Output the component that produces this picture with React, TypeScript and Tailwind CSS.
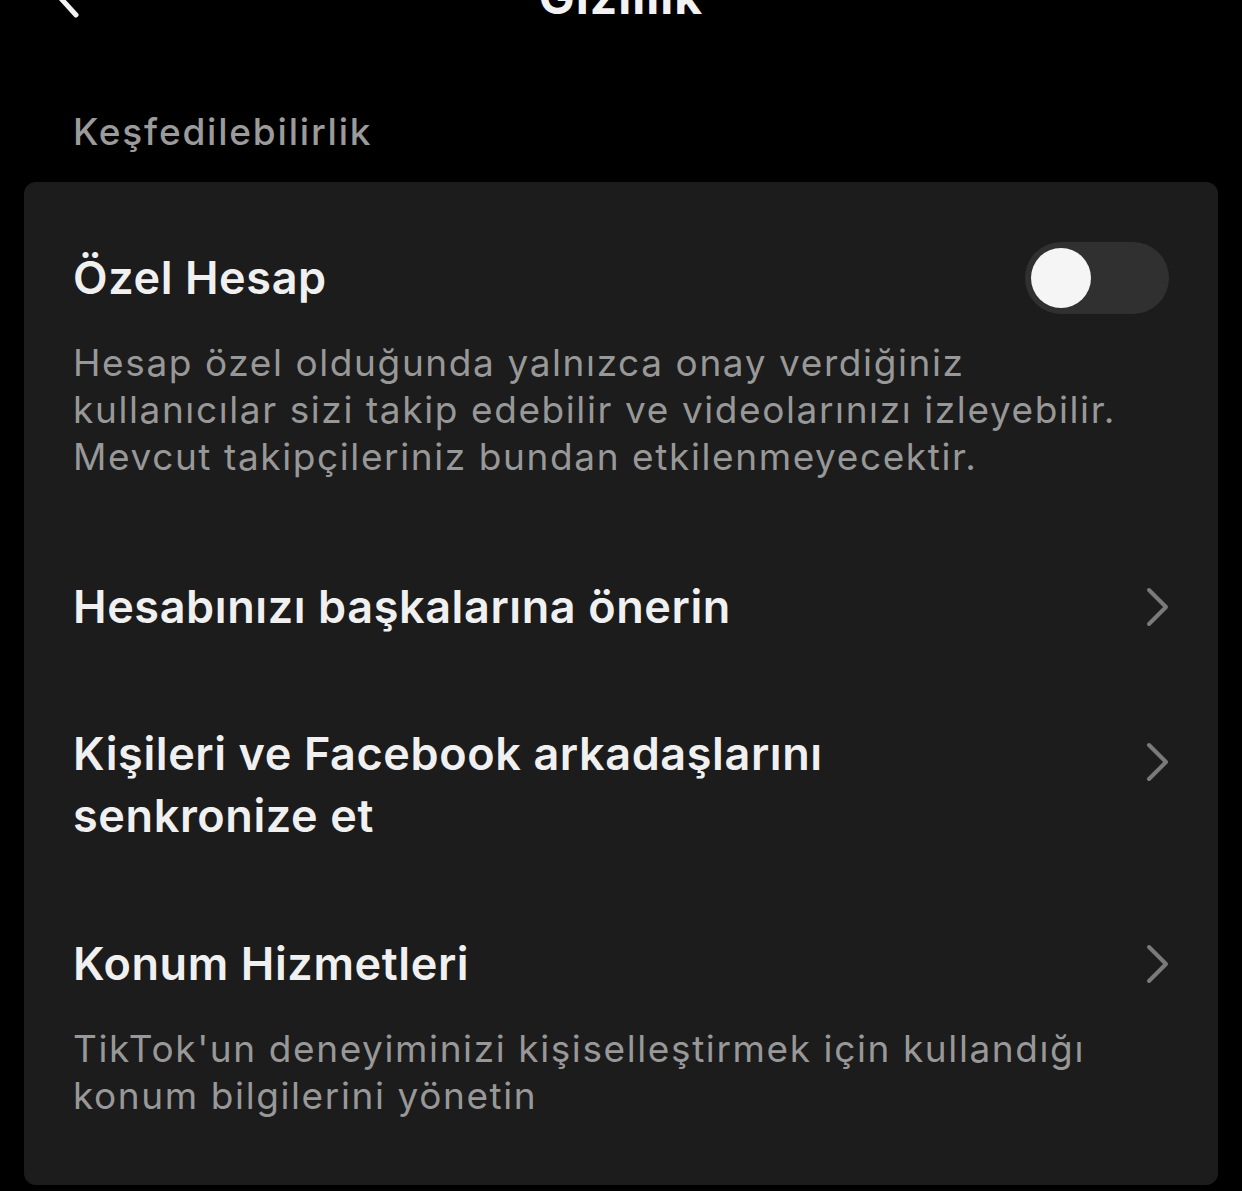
const font = { fontFamily: "Inter, 'Noto Sans', sans-serif" };

function Chevron({ className = "" }: { className?: string }) {
  return (
    <svg width="26" height="40" viewBox="0 0 26 40" fill="none" className={"shrink-0 " + className}>
      <path d="M6 3 L23 20 L6 37" stroke="#7a7a7a" strokeWidth="4" strokeLinecap="round" strokeLinejoin="round" />
    </svg>
  );
}

function Toggle() {
  return (
    <div className="w-[144px] h-[72px] rounded-full bg-[#303030] flex items-center px-[6px] shrink-0">
      <div className="w-[60px] h-[60px] rounded-full bg-[#f5f5f5]" />
    </div>
  );
}

export default function App() {
  return (
    <div className="min-h-[1191px] bg-black overflow-hidden" style={font}>
      {/* header, mostly scrolled out of view */}
      <div className="relative h-[60px] -mt-[33px] flex items-center justify-center">
        <svg width="40" height="60" viewBox="0 0 40 60" className="absolute left-[40px] top-0" fill="none">
          <path d="M36 4 L16 26 L36 48" stroke="#f2f2f2" strokeWidth="5" strokeLinecap="round" strokeLinejoin="round" />
        </svg>
        <h1 className="text-[48px] leading-none font-bold tracking-[1px] text-[#f2f2f2]">Gizlilik</h1>
      </div>

      <div className="mt-[83px] px-[73px] text-[37px] leading-[44px] font-medium tracking-[1.8px] text-[#9b9b9b]">
        Keşfedilebilirlik
      </div>

      <div className="mt-[28px] mx-[24px] rounded-[12px] bg-[#1c1c1c] px-[49px] pt-[60px] pb-[66px]">
        <div className="flex items-center justify-between h-[72px]">
          <span className="text-[45px] leading-[62px] font-semibold tracking-[0.6px] text-[#f0f0f0]">Özel Hesap</span>
          <Toggle />
        </div>
        <p className="mt-[25px] text-[37px] leading-[47px] tracking-[1.6px] text-[#989898]">
          Hesap özel olduğunda yalnızca onay verdiğiniz kullanıcılar sizi takip edebilir ve videolarınızı izleyebilir. Mevcut takipçileriniz bundan etkilenmeyecektir.
        </p>

        <div className="mt-[96px] flex items-center justify-between">
          <span className="text-[45px] leading-[62px] font-semibold tracking-[0.6px] text-[#f0f0f0]">
            Hesabınızı başkalarına önerin
          </span>
          <Chevron />
        </div>

        <div className="mt-[85px] flex items-start justify-between">
          <span className="w-[800px] text-[45px] leading-[62px] font-semibold tracking-[0.6px] text-[#f0f0f0]">
            Kişileri ve Facebook arkadaşlarını senkronize et
          </span>
          <Chevron className="mt-[19px]" />
        </div>

        <div className="mt-[86px] flex items-center justify-between">
          <span className="text-[45px] leading-[62px] font-semibold tracking-[0.6px] text-[#f0f0f0]">Konum Hizmetleri</span>
          <Chevron />
        </div>
        <p className="mt-[30px] pr-[20px] text-[37px] leading-[47px] tracking-[1.6px] text-[#989898]">
          TikTok'un deneyiminizi kişiselleştirmek için kullandığı konum bilgilerini yönetin
        </p>
      </div>
    </div>
  );
}
